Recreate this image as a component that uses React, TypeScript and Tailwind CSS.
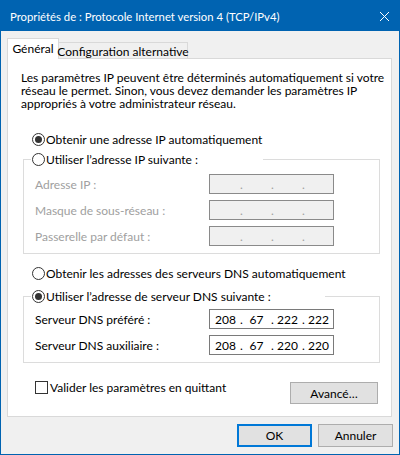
import type { ReactNode } from "react";

function Radio({ checked }: { checked?: boolean }) {
  return (
    <span className="flex h-[13px] w-[13px] shrink-0 items-center justify-center rounded-full border border-[#333333] bg-white">
      {checked && <span className="h-[7px] w-[7px] rounded-full bg-[#333333]" />}
    </span>
  );
}

function IpField({ parts, disabled }: { parts: string[]; disabled?: boolean }) {
  return (
    <div
      className={
        "flex h-[20px] w-[125px] items-center pl-px " +
        (disabled ? "border border-[#8a8a8a] bg-[#f0f0f0] text-[#a0a0a0]" : "border border-[#7a7a7a] bg-white text-black")
      }
    >
      {parts.map((p, i) => (
        <div key={i} className="flex items-center">
          {i > 0 && <span className="w-[2px] text-center">.</span>}
          <span className="w-[29px] text-center">{p}</span>
        </div>
      ))}
    </div>
  );
}

function FieldRow({ label, children, disabled }: { label: string; children: ReactNode; disabled?: boolean }) {
  return (
    <div className="flex h-[20px] items-center">
      <span className={"w-[185px] pl-[11px] " + (disabled ? "text-[#a0a0a0]" : "text-black")}>{label}</span>
      {children}
    </div>
  );
}

function Button({ children, primary }: { children: ReactNode; primary?: boolean }) {
  return (
    <button
      className={
        "flex h-[23px] w-[75px] items-center justify-center bg-[#e1e1e1] " +
        (primary ? "border-2 border-[#0078d7]" : "border border-[#adadad]")
      }
    >
      {children}
    </button>
  );
}

export default function App() {
  const empty = ["", "", "", ""];
  return (
    <div className="flex h-[455px] w-[400px] flex-col whitespace-nowrap border border-[#0063b1] bg-[#f0f0f0] font-['Lato',sans-serif] text-[12px] leading-[13px] text-black">
      <div className="flex h-[30px] shrink-0 items-center justify-between bg-[#0063b1] pl-[9px] pr-[10px] text-white">
        <span className="text-[11.3px]">Propriétés de : Protocole Internet version 4 (TCP/IPv4)</span>
        <svg width="9" height="9" viewBox="0 0 9 9" className="mt-px">
          <path d="M0 0L9 9M9 0L0 9" stroke="white" strokeWidth="1" />
        </svg>
      </div>

      <div className="flex flex-col px-[6px] pt-[7px]">
        <div className="relative z-10 -mb-px flex h-[21px] items-end">
          <div className="flex h-[21px] w-[52px] items-start justify-center border border-b-0 border-[#d9d9d9] bg-white pt-[3px]">
            Général
          </div>
          <div className="flex h-[17px] w-[129px] items-center justify-center border border-l-0 border-[#d9d9d9] bg-[#f0f0f0] pt-px">
            Configuration alternative
          </div>
        </div>

        <div className="flex h-[359px] w-[385px] flex-col border border-[#d9d9d9] bg-white">
          <p className="mt-[12px] pl-[13px]">
            Les paramètres IP peuvent être déterminés automatiquement si votre
            <br />
            réseau le permet. Sinon, vous devez demander les paramètres IP
            <br />
            appropriés à votre administrateur réseau.
          </p>

          <div className="mt-[23px] flex h-[13px] items-center gap-px pl-[24px]">
            <Radio checked />
            <span>Obtenir une adresse IP automatiquement</span>
          </div>

          <fieldset className="ml-[15px] mt-[7px] w-[357px] border border-[#dcdcdc] px-0 pb-[7px]">
            <legend className="ml-[7px] flex h-[13px] w-[232px] items-center gap-px pl-px">
              <Radio />
              <span>Utiliser l’adresse IP suivante :</span>
            </legend>
            <div className="mt-[8px] flex flex-col gap-[6px]">
              <FieldRow label="Adresse IP :" disabled>
                <IpField parts={empty} disabled />
              </FieldRow>
              <FieldRow label="Masque de sous-réseau :" disabled>
                <IpField parts={empty} disabled />
              </FieldRow>
              <FieldRow label="Passerelle par défaut :" disabled>
                <IpField parts={empty} disabled />
              </FieldRow>
            </div>
          </fieldset>

          <div className="mt-[13px] flex h-[13px] items-center gap-px pl-[24px]">
            <Radio />
            <span>Obtenir les adresses des serveurs DNS automatiquement</span>
          </div>

          <fieldset className="ml-[15px] mt-[10px] w-[357px] border border-[#dcdcdc] px-0 pb-[7px]">
            <legend className="ml-[7px] flex h-[13px] w-[294px] items-center gap-px pl-px">
              <Radio checked />
              <span>Utiliser l’adresse de serveur DNS suivante :</span>
            </legend>
            <div className="mt-[6px] flex flex-col gap-[6px]">
              <FieldRow label="Serveur DNS préféré :">
                <IpField parts={["208", "67", "222", "222"]} />
              </FieldRow>
              <FieldRow label="Serveur DNS auxiliaire :">
                <IpField parts={["208", "67", "220", "220"]} />
              </FieldRow>
            </div>
          </fieldset>

          <div className="mt-[18px] flex items-start justify-between pl-[27px] pr-[13px]">
            <div className="flex h-[13px] items-center gap-[2px]">
              <span className="h-[13px] w-[13px] border border-[#333333] bg-white" />
              <span>Valider les paramètres en quittant</span>
            </div>
            <button className="mt-px flex h-[22px] w-[88px] items-center justify-center border border-[#adadad] bg-[#e1e1e1]">
              Avancé…
            </button>
          </div>
        </div>
      </div>

      <div className="mt-[7px] flex justify-end gap-[6px] pr-[6px]">
        <Button primary>OK</Button>
        <Button>Annuler</Button>
      </div>
    </div>
  );
}
